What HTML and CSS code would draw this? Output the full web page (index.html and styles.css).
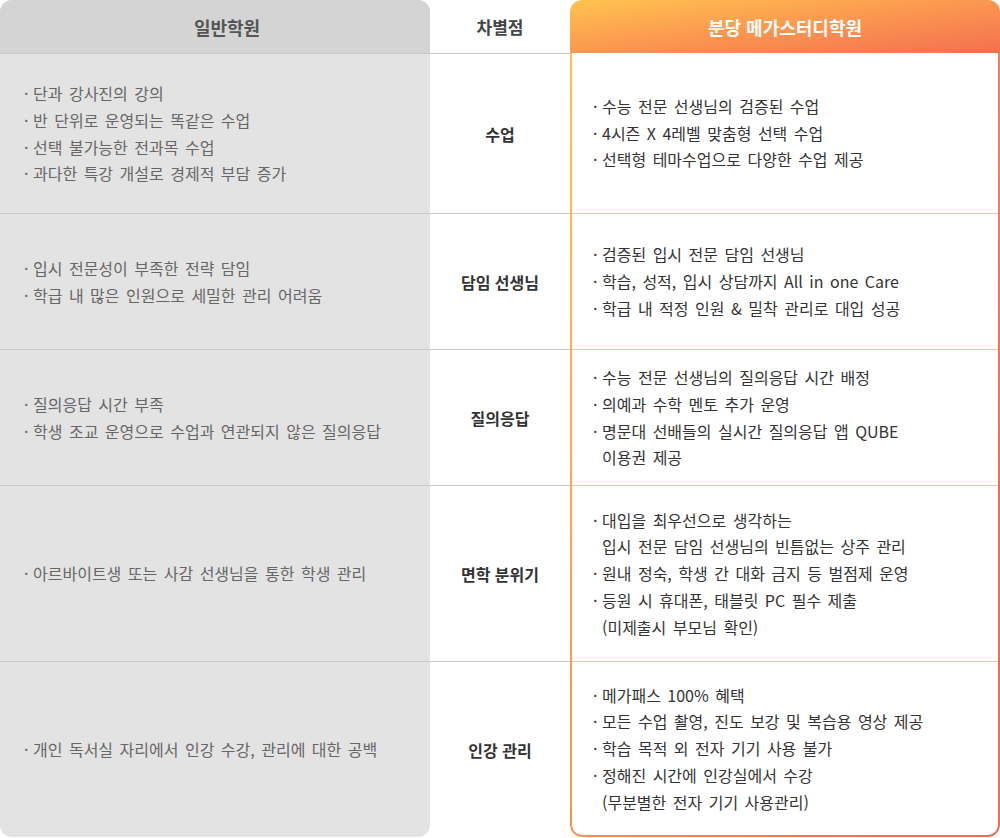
FILE: index.html
```html
<!DOCTYPE html>
<html lang="ko">
<head>
    <meta charset="UTF-8">
    <meta name="viewport" content="width=device-width, initial-scale=1.0">
    <title>일반학원 vs 분당 메가스터디학원</title>
    <link rel="stylesheet" href="styles.css">
</head>
<body>
    <div class="compare">
        <div class="col col-normal">
            <div class="cell head">일반학원</div>
            <div class="cell">
                <ul class="points">
                    <li>단과 강사진의 강의</li>
                    <li>반 단위로 운영되는 똑같은 수업</li>
                    <li>선택 불가능한 전과목 수업</li>
                    <li>과다한 특강 개설로 경제적 부담 증가</li>
                </ul>
            </div>
            <div class="cell">
                <ul class="points">
                    <li>입시 전문성이 부족한 전략 담임</li>
                    <li>학급 내 많은 인원으로 세밀한 관리 어려움</li>
                </ul>
            </div>
            <div class="cell">
                <ul class="points">
                    <li>질의응답 시간 부족</li>
                    <li>학생 조교 운영으로 수업과 연관되지 않은 질의응답</li>
                </ul>
            </div>
            <div class="cell">
                <ul class="points">
                    <li>아르바이트생 또는 사감 선생님을 통한 학생 관리</li>
                </ul>
            </div>
            <div class="cell">
                <ul class="points">
                    <li>개인 독서실 자리에서 인강 수강, 관리에 대한 공백</li>
                </ul>
            </div>
        </div>

        <div class="col col-label">
            <div class="cell head">차별점</div>
            <div class="cell">수업</div>
            <div class="cell">담임 선생님</div>
            <div class="cell">질의응답</div>
            <div class="cell">면학 분위기</div>
            <div class="cell">인강 관리</div>
        </div>

        <div class="col col-mega">
            <div class="cell head">분당 메가스터디학원</div>
            <div class="mega-body">
                <div class="cell">
                    <ul class="points">
                        <li>수능 전문 선생님의 검증된 수업</li>
                        <li>4시즌 X 4레벨 맞춤형 선택 수업</li>
                        <li>선택형 테마수업으로 다양한 수업 제공</li>
                    </ul>
                </div>
                <div class="cell">
                    <ul class="points">
                        <li>검증된 입시 전문 담임 선생님</li>
                        <li>학습, 성적, 입시 상담까지 All in one Care</li>
                        <li>학급 내 적정 인원 &amp; 밀착 관리로 대입 성공</li>
                    </ul>
                </div>
                <div class="cell">
                    <ul class="points">
                        <li>수능 전문 선생님의 질의응답 시간 배정</li>
                        <li>의예과 수학 멘토 추가 운영</li>
                        <li>명문대 선배들의 실시간 질의응답 앱 QUBE<br>이용권 제공</li>
                    </ul>
                </div>
                <div class="cell">
                    <ul class="points">
                        <li>대입을 최우선으로 생각하는<br>입시 전문 담임 선생님의 빈틈없는 상주 관리</li>
                        <li>원내 정숙, 학생 간 대화 금지 등 벌점제 운영</li>
                        <li>등원 시 휴대폰, 태블릿 PC 필수 제출<br>(미제출시 부모님 확인)</li>
                    </ul>
                </div>
                <div class="cell">
                    <ul class="points">
                        <li>메가패스 100% 혜택</li>
                        <li>모든 수업 촬영, 진도 보강 및 복습용 영상 제공</li>
                        <li>학습 목적 외 전자 기기 사용 불가</li>
                        <li>정해진 시간에 인강실에서 수강<br>(무분별한 전자 기기 사용관리)</li>
                    </ul>
                </div>
            </div>
        </div>
    </div>
</body>
</html>
```

FILE: styles.css
```css
body {
    margin: 0;
    font-family: "Noto Sans CJK KR", "Noto Sans", sans-serif;
    background-color: #fff;
}
.compare {
    display: flex;
    width: 1000px;
    height: 837px;
}
.col {
    display: grid;
    grid-template-rows: 54px 160px 136px 136px 176px 175px;
}
.col-normal {
    width: 430px;
    background-color: #e3e3e3;
    border-radius: 12px;
    overflow: hidden;
}
.col-label {
    width: 140px;
}
.col-mega {
    width: 430px;
    grid-template-rows: 53px 1fr;
    border-radius: 12px;
    overflow: hidden;
}
.cell {
    display: flex;
    align-items: center;
    box-sizing: border-box;
    border-bottom: 1px solid #cacaca;
}
.cell:last-child {
    border-bottom: none;
}
.head {
    justify-content: center;
    font-size: 18px;
    font-weight: 700;
    color: #555;
}
.col-normal .head {
    background-color: #d4d4d4;
}
.col-normal .cell {
    padding-left: 24px;
}
.col-label .cell {
    justify-content: center;
    font-size: 16px;
    font-weight: 700;
    color: #333;
}
.col-label .head {
    font-size: 17px;
    color: #444;
}
.col-mega .head {
    color: #fff;
    border-bottom: none;
    background: linear-gradient(to bottom right, #ffc44f 0%, #fb9750 50%, #f4704f 100%);
}
.mega-body {
    display: grid;
    grid-template-rows: 161px 136px 136px 176px 1fr;
    border: 2px solid transparent;
    border-top: none;
    border-radius: 0 0 12px 12px;
    background:
        linear-gradient(#fff, #fff) padding-box,
        linear-gradient(110deg, #ffc04e 0%, #fb8c4c 45%, #f26c50 85%) border-box;
}
.mega-body .cell {
    padding-left: 21px;
    border-bottom-color: #f8bfad;
}
.mega-body .cell:last-child {
    border-bottom: none;
}
.points {
    list-style: none;
    margin: 0;
    padding: 0;
    font-size: 16px;
    line-height: 26.7px;
    word-spacing: 2px;
    color: #666;
}
.points li {
    padding-left: 9px;
    text-indent: -9px;
}
.points li::before {
    content: "·";
    display: inline-block;
    width: 9px;
    text-indent: 0;
}
.mega-body .points {
    color: #333;
}
```
